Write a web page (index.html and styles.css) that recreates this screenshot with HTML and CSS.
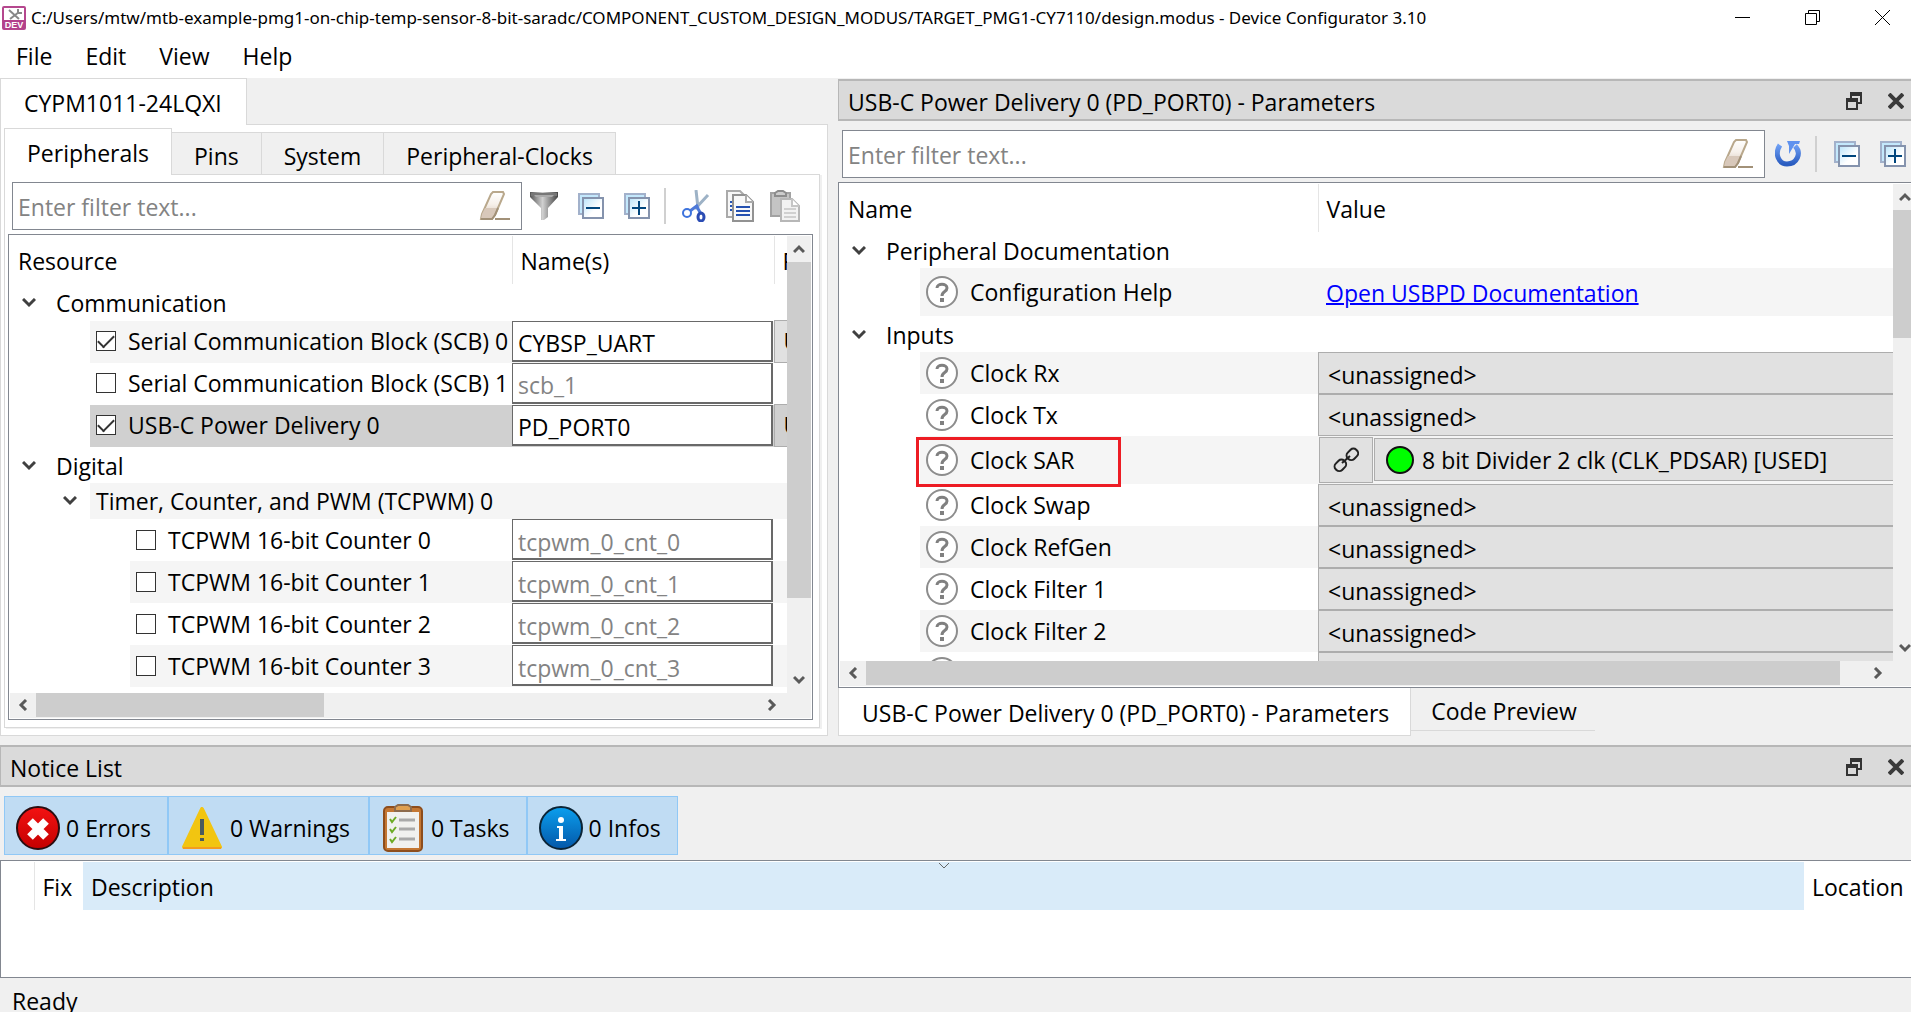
FILE: index.html
```html
<!DOCTYPE html>
<html lang="en">
<head>
<meta charset="utf-8">
<title>Device Configurator 3.10</title>
<link rel="stylesheet" href="styles.css">
</head>
<body>
<svg class="defs" width="0" height="0" aria-hidden="true">
  <defs>
    <linearGradient id="gEraser" x1="0" y1="0" x2="0" y2="1"><stop offset="0" stop-color="#fff"/><stop offset=".45" stop-color="#f6f0ea"/><stop offset="1" stop-color="#d3c2b2"/></linearGradient>
    <linearGradient id="gFunnel"><stop offset="0" stop-color="#555"/><stop offset=".45" stop-color="#d0d0d0"/><stop offset="1" stop-color="#444"/></linearGradient>
    <linearGradient id="gPage" x1="0" y1="0" x2="1" y2="1"><stop offset="0" stop-color="#b8e4fb"/><stop offset=".6" stop-color="#fff"/></linearGradient>
    <linearGradient id="gBlue" x1="0" y1="0" x2="0" y2="1"><stop offset="0" stop-color="#0b9fee"/><stop offset="1" stop-color="#0457a8"/></linearGradient>
    <linearGradient id="gRed" x1="0" y1="0" x2="0" y2="1"><stop offset="0" stop-color="#f31212"/><stop offset="1" stop-color="#c40000"/></linearGradient>
    <linearGradient id="gReload" x1="0" y1="0" x2="0" y2="1"><stop offset="0" stop-color="#6fa0f5"/><stop offset="1" stop-color="#2a5cc0"/></linearGradient>
  </defs>
  <symbol id="eraser" viewBox="0 0 32 30"><path d="M2 28 3 23 12 3 14 1H24L25 3 16 24 13 28Z" fill="url(#gEraser)" stroke="#b9a88c" stroke-width="2"/><path d="M6 17H18L13 28H2L3 23Z" fill="#d8c8ba"/><path d="M2 28H13L16 24 19 17M16 28H31" fill="none" stroke="#a29178" stroke-width="2"/></symbol>
  <symbol id="funnel" viewBox="0 0 28 28"><path d="M0 0H28V5L18 16V25L14 28H11V16L0 5Z" fill="url(#gFunnel)"/><path d="M1 1H27V4H1Z" fill="#777"/><path d="M4 3H24L22 5H6Z" fill="#aaa"/></symbol>
  <symbol id="collapse" viewBox="0 0 26 26"><path d="M1 1H21V21H1Z" fill="#c3e8fc" stroke="#a2b1cb" stroke-width="2"/><path d="M5 5H25V25H5Z" fill="url(#gPage)" stroke="#8593ad" stroke-width="2"/><path d="M8 15H22" stroke="#00467d" stroke-width="2"/></symbol>
  <symbol id="expand" viewBox="0 0 26 26"><path d="M1 1H21V21H1Z" fill="#c3e8fc" stroke="#a2b1cb" stroke-width="2"/><path d="M5 5H25V25H5Z" fill="url(#gPage)" stroke="#8593ad" stroke-width="2"/><path d="M8 15H22M15 8V22" stroke="#00467d" stroke-width="2"/></symbol>
  <symbol id="cut" viewBox="0 0 28 32"><path d="M14 0 16 18M26 5 13 19" stroke="#9db2c6" stroke-width="3" fill="none"/><path d="M16 15 8 21M15 17 19 24" stroke="#4d79d8" stroke-width="3"/><ellipse cx="5" cy="23" rx="4" ry="4" fill="none" stroke="#3d73dd" stroke-width="2"/><ellipse cx="19" cy="27" rx="3" ry="4" fill="none" stroke="#2b4cb4" stroke-width="3"/></symbol>
  <symbol id="copy" viewBox="0 0 28 32"><path d="M1 1H14L20 7V27H1Z" fill="#f7f7f7" stroke="#aaa" stroke-width="2"/><path d="M4 12H8M4 16H8M4 20H8" stroke="#2453b4" stroke-width="2"/><path d="M7 5H20L27 12V31H7Z" fill="#f8f8f8" stroke="#929292" stroke-width="2"/><path d="M20 5V12H27" fill="#fff" stroke="#aaa" stroke-width="2"/><path d="M10 17H24M10 21H24M10 25H24" stroke="#2450b0" stroke-width="2"/></symbol>
  <symbol id="paste" viewBox="0 0 30 32"><path d="M1 3H20V26H1Z" fill="#c4c4c4" stroke="#a2a2a2" stroke-width="2"/><path d="M5 6V3L8 1H13L16 3V6Z" fill="#ccc" stroke="#8d8d8d" stroke-width="2"/><path d="M11 9H22L29 16V31H11Z" fill="#f2f2f2" stroke="#b7b7b7" stroke-width="2"/><path d="M22 9V16H29" fill="#fff" stroke="#c5c5c5" stroke-width="2"/><path d="M14 19H26M14 23H26M14 27H26" stroke="#d0d0d0" stroke-width="2"/></symbol>
  <symbol id="reload" viewBox="0 0 26 26"><path d="M5 4C-1 13 4 23 12 23 22 23 27 12 20 5" fill="none" stroke="url(#gReload)" stroke-width="5"/><path d="M12 0H25L24 3H20L14 13V5Z" fill="#5f92ee"/></symbol>
  <symbol id="down" viewBox="0 0 14 10"><path d="M1 1 7 7 13 1" fill="none" stroke="#404040" stroke-width="3"/></symbol>
  <symbol id="arrow" viewBox="0 0 12 12"><path d="M1 9 6 4 11 9" fill="none" stroke="#5a5a5a" stroke-width="3"/></symbol>
  <symbol id="help" viewBox="0 0 32 32"><circle cx="16" cy="16" r="15" fill="#fff" stroke="#8d8d8d" stroke-width="2"/><path d="M11 12C11 7 21 7 21 12 21 16 16 15 16 20" fill="none" stroke="#808080" stroke-width="3"/><path d="M14 22H18V26H14Z" fill="#808080"/></symbol>
  <symbol id="float" viewBox="0 0 16 18"><path d="M5 6V2H15V11H12" fill="none" stroke="#333" stroke-width="2"/><path d="M4 0H16V4H4Z" fill="#333"/><path d="M1 8H11V17H1Z" fill="none" stroke="#333" stroke-width="2"/><path d="M0 6H12V10H0Z" fill="#333"/></symbol>
  <symbol id="close" viewBox="0 0 16 16"><path d="M1 1 15 15M15 1 1 15" stroke="#3a3a3a" stroke-width="4"/></symbol>
</svg>

<header class="titlebar">
  <svg class="appicon" viewBox="0 0 24 24" width="24" height="24" role="img" aria-label="DEV"><rect x="1" y="1" width="22" height="22" rx="1" fill="#fff" stroke="#b5478e" stroke-width="2"/><path d="M1 14H23V23H1Z" fill="#b3418b"/><path d="M7 4 17 13M17 6 8 13" stroke="#888" stroke-width="2"/><path d="M16 3V7H20" fill="none" stroke="#888" stroke-width="2"/><text x="12" y="22" text-anchor="middle" class="dev">DEV</text></svg>
  <h1 class="title">C:/Users/mtw/mtb-example-pmg1-on-chip-temp-sensor-8-bit-saradc/COMPONENT_CUSTOM_DESIGN_MODUS/TARGET_PMG1-CY7110/design.modus - Device Configurator 3.10</h1>
  <div class="winbtns">
    <button aria-label="Minimize"><svg width="16" height="16" viewBox="0 0 16 16"><path d="M0 7.5H15" stroke="#000"/></svg></button>
    <button aria-label="Restore"><svg width="16" height="16" viewBox="0 0 16 16"><path d="M.5 3.5H11.5V14.5H.5ZM3.5 3.5V.5H14.5V11.5H11.5" fill="none" stroke="#000"/></svg></button>
    <button aria-label="Close"><svg width="16" height="16" viewBox="0 0 16 16"><path d="M0 0 15 15M15 0 0 15" stroke="#000"/></svg></button>
  </div>
</header>
<nav class="menubar"><button>File</button><button>Edit</button><button>View</button><button>Help</button></nav>

<main class="docks">
  <section class="left">
    <div class="device-tabs"><button class="device-tab">CYPM1011-24LQXI</button></div>
    <div class="device-pane">
      <div class="tabs">
        <button class="tab active">Peripherals</button><button class="tab">Pins</button><button class="tab">System</button><button class="tab">Peripheral-Clocks</button>
      </div>
      <div class="pane">
        <div class="toolbar">
          <div class="filter"><input type="text" placeholder="Enter filter text..." aria-label="Filter resources"><button aria-label="Clear"><svg width="32" height="30"><use href="#eraser"/></svg></button></div>
          <button aria-label="Filter"><svg width="28" height="28"><use href="#funnel"/></svg></button>
          <button class="gap" aria-label="Collapse all"><svg width="26" height="26"><use href="#collapse"/></svg></button>
          <button class="gap" aria-label="Expand all"><svg width="26" height="26"><use href="#expand"/></svg></button>
          <span class="sep"></span>
          <button aria-label="Cut"><svg width="28" height="32"><use href="#cut"/></svg></button>
          <button aria-label="Copy"><svg width="28" height="32"><use href="#copy"/></svg></button>
          <button aria-label="Paste"><svg width="30" height="32"><use href="#paste"/></svg></button>
        </div>
        <div class="grid resources">
          <div class="view">
            <table>
              <colgroup><col class="c-res"><col class="c-name"><col></colgroup>
              <thead><tr class="head"><th>Resource</th><th>Name(s)</th><th class="cut">Personality</th></tr></thead>
              <tbody>
                <tr class="group"><td colspan="3"><div class="node"><svg width="14" height="10"><use href="#down"/></svg>Communication</div></td></tr>
                <tr class="row alt"><td><label class="item"><input type="checkbox" checked>Serial Communication Block (SCB) 0</label></td><td><input class="name" type="text" value="CYBSP_UART" aria-label="Name of SCB 0"></td><td class="combo cut">UART</td></tr>
                <tr class="row"><td><label class="item"><input type="checkbox">Serial Communication Block (SCB) 1</label></td><td><input class="name" type="text" placeholder="scb_1" aria-label="Name of SCB 1"></td><td></td></tr>
                <tr class="row selected"><td><label class="item"><input type="checkbox" checked>USB-C Power Delivery 0</label></td><td><input class="name" type="text" value="PD_PORT0" aria-label="Name of USB-C Power Delivery 0"></td><td class="combo cut">USBPD</td></tr>
                <tr class="group"><td colspan="3"><div class="node"><svg width="14" height="10"><use href="#down"/></svg>Digital</div></td></tr>
                <tr class="group alt"><td colspan="3"><div class="node sub"><svg width="14" height="10"><use href="#down"/></svg><span>Timer, Counter, and PWM (TCPWM) 0</span></div></td></tr>
                <tr class="row"><td><label class="item deep"><input type="checkbox">TCPWM 16-bit Counter 0</label></td><td><input class="name" type="text" placeholder="tcpwm_0_cnt_0" aria-label="Name of counter 0"></td><td></td></tr>
                <tr class="row alt"><td><label class="item deep"><input type="checkbox">TCPWM 16-bit Counter 1</label></td><td><input class="name" type="text" placeholder="tcpwm_0_cnt_1" aria-label="Name of counter 1"></td><td></td></tr>
                <tr class="row"><td><label class="item deep"><input type="checkbox">TCPWM 16-bit Counter 2</label></td><td><input class="name" type="text" placeholder="tcpwm_0_cnt_2" aria-label="Name of counter 2"></td><td></td></tr>
                <tr class="row alt"><td><label class="item deep"><input type="checkbox">TCPWM 16-bit Counter 3</label></td><td><input class="name" type="text" placeholder="tcpwm_0_cnt_3" aria-label="Name of counter 3"></td><td></td></tr>
              </tbody>
            </table>
          </div>
          <div class="vbar"><svg class="up" width="12" height="12"><use href="#arrow"/></svg><span class="thumb"></span><svg class="dn" width="12" height="12"><use href="#arrow"/></svg></div>
          <div class="hbar"><svg class="lt" width="12" height="12"><use href="#arrow"/></svg><span class="thumb"></span><svg class="rt" width="12" height="12"><use href="#arrow"/></svg></div>
        </div>
      </div>
    </div>
  </section>

  <section class="right">
    <div class="docktitle"><h2>USB-C Power Delivery 0 (PD_PORT0) - Parameters</h2><button aria-label="Float"><svg width="16" height="18"><use href="#float"/></svg></button><button aria-label="Close panel"><svg width="16" height="16"><use href="#close"/></svg></button></div>
    <div class="toolbar">
      <div class="filter"><input type="text" placeholder="Enter filter text..." aria-label="Filter parameters"><button aria-label="Clear"><svg width="32" height="30"><use href="#eraser"/></svg></button></div>
      <button class="reload" aria-label="Reload"><svg width="26" height="26"><use href="#reload"/></svg></button>
      <span class="sep"></span>
      <button aria-label="Collapse all"><svg width="26" height="26"><use href="#collapse"/></svg></button>
      <button class="gap" aria-label="Expand all"><svg width="26" height="26"><use href="#expand"/></svg></button>
    </div>
    <div class="grid params">
      <div class="view">
        <table>
          <colgroup><col class="c-param"><col></colgroup>
          <thead><tr class="head"><th>Name</th><th>Value</th></tr></thead>
          <tbody>
            <tr class="group"><td colspan="2"><div class="node"><svg width="14" height="10"><use href="#down"/></svg>Peripheral Documentation</div></td></tr>
            <tr class="tall alt"><td><div class="item"><svg width="32" height="32"><use href="#help"/></svg>Configuration Help</div></td><td class="doc"><a href="#">Open USBPD Documentation</a></td></tr>
            <tr class="group"><td colspan="2"><div class="node"><svg width="14" height="10"><use href="#down"/></svg>Inputs</div></td></tr>
            <tr class="row alt"><td><div class="item"><svg width="32" height="32"><use href="#help"/></svg>Clock Rx</div></td><td><button class="value">&lt;unassigned&gt;</button></td></tr>
            <tr class="row"><td><div class="item"><svg width="32" height="32"><use href="#help"/></svg>Clock Tx</div></td><td><button class="value">&lt;unassigned&gt;</button></td></tr>
            <tr class="tall alt"><td><div class="item marked"><svg width="32" height="32"><use href="#help"/></svg>Clock SAR</div></td><td><div class="linked"><button class="link" aria-label="Go to clock"><svg width="26" height="26" viewBox="0 0 26 26"><g fill="none" stroke="#222" stroke-width="2"><rect x="-4" y="-6" width="9" height="12" rx="4" transform="translate(19 7) rotate(45)"/><rect x="-4" y="-6" width="9" height="12" rx="4" transform="translate(7 18) rotate(45)"/><path d="M9 16 17 9"/></g></svg></button><button class="clock"><svg width="28" height="28" viewBox="0 0 28 28"><circle cx="14" cy="14" r="13" fill="#0f0" stroke="#111" stroke-width="2"/></svg>8 bit Divider 2 clk (CLK_PDSAR) [USED]</button></div></td></tr>
            <tr class="row"><td><div class="item"><svg width="32" height="32"><use href="#help"/></svg>Clock Swap</div></td><td><button class="value">&lt;unassigned&gt;</button></td></tr>
            <tr class="row alt"><td><div class="item"><svg width="32" height="32"><use href="#help"/></svg>Clock RefGen</div></td><td><button class="value">&lt;unassigned&gt;</button></td></tr>
            <tr class="row"><td><div class="item"><svg width="32" height="32"><use href="#help"/></svg>Clock Filter 1</div></td><td><button class="value">&lt;unassigned&gt;</button></td></tr>
            <tr class="row alt"><td><div class="item"><svg width="32" height="32"><use href="#help"/></svg>Clock Filter 2</div></td><td><button class="value">&lt;unassigned&gt;</button></td></tr>
            <tr class="row"><td><div class="item"><svg width="32" height="32"><use href="#help"/></svg></div></td><td><button class="value" aria-label="Next parameter"></button></td></tr>
          </tbody>
        </table>
      </div>
      <div class="vbar"><svg class="up" width="12" height="12"><use href="#arrow"/></svg><span class="thumb"></span><svg class="dn" width="12" height="12"><use href="#arrow"/></svg></div>
      <div class="hbar"><svg class="lt" width="12" height="12"><use href="#arrow"/></svg><span class="thumb"></span><svg class="rt" width="12" height="12"><use href="#arrow"/></svg></div>
    </div>
    <div class="bottomtabs"><button class="active">USB-C Power Delivery 0 (PD_PORT0) - Parameters</button><button>Code Preview</button></div>
  </section>
</main>

<section class="notices">
  <div class="docktitle"><h2>Notice List</h2><button aria-label="Float"><svg width="16" height="18"><use href="#float"/></svg></button><button aria-label="Close panel"><svg width="16" height="16"><use href="#close"/></svg></button></div>
  <div class="counts">
    <button class="errors"><svg width="44" height="44" viewBox="0 0 44 44"><circle cx="22" cy="22" r="21" fill="url(#gRed)" stroke="#2b0d10" stroke-width="2"/><path d="M14 15 30 31M30 15 14 31" stroke="#fff" stroke-width="8"/></svg>0 Errors</button>
    <button class="warnings"><svg width="40" height="42" viewBox="0 0 40 42"><path d="M20 2 38 40H2Z" fill="#f2c511" stroke="#f2c511" stroke-width="4" stroke-linejoin="round"/><path d="M1 41H39" stroke="#f39c1f" stroke-width="2"/><path d="M18 12H22V28H18ZM18 31H22V34H18Z" fill="#4b5a5e"/></svg>0 Warnings</button>
    <button class="tasks"><svg width="40" height="48" viewBox="0 0 40 48"><rect x="1" y="3" width="38" height="44" rx="4" fill="#c47733" stroke="#8d4d1c" stroke-width="2"/><rect x="4" y="8" width="32" height="36" fill="#f1f1ef"/><path d="M12 7V3L15 1H25L28 3V7Z" fill="#e0a050" stroke="#8d6b4c" stroke-width="2"/><path d="M16 16H32M16 25H32M16 35H32" stroke="#a9a9a9" stroke-width="3"/><path d="M7 15 9 18 13 13M7 25 9 28 13 23M7 35 9 38 13 33" fill="none" stroke="#6cab24" stroke-width="2"/></svg>0 Tasks</button>
    <button class="infos"><svg width="44" height="44" viewBox="0 0 44 44"><circle cx="22" cy="22" r="21" fill="url(#gBlue)" stroke="#0b2436" stroke-width="2"/><circle cx="22" cy="14" r="3" fill="#fff"/><path d="M18 20H24V33H27V35H17V33H20V22H18Z" fill="#fff"/></svg>0 Infos</button>
  </div>
  <div class="noticetable">
    <table>
      <colgroup><col class="n-type"><col class="n-fix"><col><col class="n-loc"></colgroup>
      <thead><tr class="head"><th></th><th>Fix</th><th class="sorted">Description<svg class="sort" width="12" height="7" viewBox="0 0 12 7"><path d="M1 1 6 6 11 1" fill="none" stroke="#666"/></svg></th><th>Location</th></tr></thead>
    </table>
  </div>
</section>
<footer class="status">Ready</footer>
</body>
</html>
```
FILE: styles.css
```css
* { box-sizing: border-box; }
body {
  margin: 0;
  min-height: 100vh;
  display: flex;
  flex-direction: column;
  overflow: hidden;
  background: #f0f0f0;
  color: #000;
  font: 23px/30px "Open Sans", "Noto Sans", sans-serif;
}
button, input { font: inherit; color: inherit; border: 0; padding: 0; margin: 0; background: none; }
h1, h2 { margin: 0; font: inherit; white-space: nowrap; }
svg { display: block; flex: none; }
button { white-space: nowrap; }
table { width: 100%; border-collapse: collapse; table-layout: fixed; }
th, td { padding: 0; font-weight: 400; text-align: left; vertical-align: top; white-space: nowrap; }
input::placeholder { color: #838383; opacity: 1; }
.defs { position: absolute; }

.titlebar { display: flex; align-items: center; height: 35px; padding: 0 20px 0 2px; gap: 5px; background: #fff; }
.title { flex: 1; min-width: 0; font-family: "Noto Sans", "Open Sans", sans-serif; font-size: 17px; overflow: hidden; }
.dev { font: bold 9px "Liberation Sans", sans-serif; fill: #fff; }
.winbtns { display: flex; gap: 54px; }
.menubar { display: flex; height: 43px; padding: 0 16px 2px; gap: 33px; background: #fff; align-items: center; }

.docks { display: grid; grid-template-columns: minmax(0, 828fr) minmax(0, 1073fr); column-gap: 10px; }
.device-tabs { display: flex; }
.device-tab { height: 47px; padding: 2px 24px 0 23px; background: #fff; border: 1px solid #d9d9d9; border-bottom: 0; margin-bottom: -1px; position: relative; }
.device-pane { background: #fff; border: 1px solid #d9d9d9; padding: 3px 7px 7px 3px; }
.tabs { display: flex; align-items: flex-end; }
.tab { height: 43px; padding: 4px 22px 0; background: #f0f0f0; border: 1px solid #d9d9d9; border-left: 0; margin-bottom: -1px; }
.tab.active { height: 47px; background: #fff; border-left: 1px solid #d9d9d9; border-bottom: 0; position: relative; padding: 2px 22px 0; }
.pane { border: 1px solid #d9d9d9; padding: 7px 6px 7px 3px; box-shadow: 2px 1px #f0f0f0; }

.toolbar { display: flex; align-items: center; }
.toolbar > button { display: grid; place-items: center; }
.pane .toolbar { padding: 0 13px 0 4px; gap: 16px; }
.pane .filter { margin-right: -8px; }
.pane .gap { margin-left: 4px; }
.pane .sep { margin-left: -2px; }
.filter { flex: 1; min-width: 0; display: flex; align-items: center; height: 48px; border: 1px solid #828790; background: #fff; padding: 0 10px 0 5px; }
.filter input { flex: 1; min-width: 0; outline: 0; height: 40px; padding-top: 2px; }
.sep { width: 2px; height: 36px; background: #d0d0d0; }

.grid { display: grid; border: 1px solid #828790; background: #fff; padding: 1px; margin-top: 4px; }
.view { overflow: hidden; min-width: 0; }
.resources { grid-template: 457px 25px / minmax(0, 1fr) 24px; }
.params { grid-template: 477px 25px / minmax(0, 1fr) 18px; }
.c-res { width: 502px; }
.c-name { width: 262px; }
.c-param { width: 478px; }
.head th { height: 48px; padding: 10px 8px 8px; border-right: 1px solid #e5e5e5; overflow: hidden; }
.head th:last-child { border-right: 0; }
.group { height: 36px; }
.row { height: 42px; }
.tall { height: 48px; }
.cut { overflow: hidden; padding-left: 9px; }
.node { display: flex; align-items: center; height: 36px; padding: 2px 0 0 12px; gap: 20px; }
.node.sub { padding: 0 0 0 53px; gap: 13px; }
.node.sub span { flex: 1; height: 36px; line-height: 36px; padding-left: 6px; background: #f5f5f5; }
.item { display: flex; align-items: center; height: 100%; margin-left: 80px; padding-left: 6px; gap: 12px; }
.item.deep { margin-left: 120px; }
.row .item { height: 42px; padding-bottom: 1px; }
.tall .item { height: 48px; }
.alt .item, .alt td + td { background: #f5f5f5; }
.selected .item, .selected td + td { background: #d0d0d0; }
input[type="checkbox"] { appearance: none; width: 20px; height: 20px; border: 1px solid #333; background: #fff; display: grid; place-items: center; }
input[type="checkbox"]:checked::before { content: ""; width: 14px; height: 7px; border: solid #333; border-width: 0 0 2px 2px; transform: translateY(-2px) rotate(-45deg); }
.name { display: block; width: 261px; height: 41px; background: #fff; border: solid #696969; border-width: 1px 2px 2px 1px; padding: 5px 5px 0; outline: 0; }
.row .combo.cut { border: 1px solid #adadad; border-right: 0; background: #e1e1e1; line-height: 40px; }
.selected .combo.cut { background: #d0d0d0; }

.vbar, .hbar { display: flex; background: #f0f0f0; overflow: hidden; }
.vbar { flex-direction: column; grid-row: 1; grid-column: 2; }
.hbar { grid-column: 1 / 3; align-items: flex-start; }
.vbar svg { margin: 7px 6px; }
.hbar svg { margin: 6px 7px; }
.dn { transform: rotate(180deg); }
.lt { transform: rotate(-90deg); }
.rt { transform: rotate(90deg); }
.thumb { background: #cdcdcd; }
.vbar .thumb { width: 24px; }
.hbar .thumb { height: 24px; }
.resources .vbar .thumb { height: 336px; }
.resources .hbar .thumb { width: 288px; }
.params .vbar .thumb { height: 128px; }
.params .hbar .thumb { flex: 1; margin-right: 25px; }
.vbar .dn { margin-top: auto; }
.resources .rt { margin: 6px 33px 6px auto; }
.params .rt { margin-right: 27px; }
.vbar .thumb, .hbar .thumb { flex-shrink: 0; }

.right { padding-top: 1px; }
.docktitle { display: flex; align-items: center; height: 42px; background: #dadada; border: 2px solid #b7b7b7; border-width: 2px 0 2px 1px; padding: 4px 7px 0 9px; gap: 26px; }
.docktitle h2 { flex: 1; }
.docktitle button { padding-bottom: 3px; }
.right .toolbar { padding: 9px 5px 0 4px; }
.right .reload { margin: 0 14px 0 10px; }
.right .sep { margin-right: 17px; }
.right .gap { margin-left: 20px; }
.params { border-right: 0; padding-right: 0; }
.doc { padding: 10px 8px 8px; }
.doc a { color: #00f; text-decoration-thickness: 2px; }
.marked { position: relative; }
.marked::after { content: ""; box-sizing: border-box; position: absolute; left: -4px; top: 1px; width: 205px; height: 50px; border: 3px solid #ed1c24; }
.value { display: block; width: 100%; height: 42px; text-align: left; padding: 4px 0 0 9px; background: #e1e1e1; border: 1px solid #adadad; border-right: 0; }
.linked { display: flex; height: 48px; padding: 1px 0 0 1px; gap: 1px; }
.link { width: 54px; height: 46px; background: #e1e1e1; border: 1px solid #adadad; display: grid; place-items: center; }
.clock { flex: 1; height: 43px; margin-top: 1px; background: #e1e1e1; border: 1px solid #adadad; border-right: 0; display: flex; align-items: center; gap: 8px; padding: 0 11px; }
.bottomtabs { display: flex; align-items: flex-start; }
.bottomtabs button { height: 43px; padding: 4px 18px 0 20px; border-bottom: 1px solid #d9d9d9; }
.bottomtabs .active { height: 48px; padding: 3px 21px 0 23px; background: #fff; border: 1px solid #d9d9d9; border-top: 0; }

.notices { margin-top: 9px; }
.counts { display: flex; padding: 9px 4px 5px; }
.counts button { display: flex; align-items: center; gap: 6px; height: 59px; background: #c0dcf3; border: 1px solid #90c8f6; padding: 5px 16px 0 11px; }
.counts .warnings, .counts .tasks { gap: 8px; padding-left: 13px; }
.counts .warnings { padding-right: 18px; }
.noticetable { height: 118px; background: #fff; border: 1px solid #828790; border-right: 0; padding: 1px 0; }
.n-type { width: 33px; }
.n-fix { width: 49px; }
.n-loc { width: 107px; }
.noticetable .head th.sorted { position: relative; background: #d9ebf9; border: 0; }
.noticetable .head th:nth-child(2) { border: 0; }
.sort { position: absolute; top: 0; left: 50%; margin-left: -6px; }
.status { padding: 8px 12px 0; height: 34px; white-space: nowrap; }
```
